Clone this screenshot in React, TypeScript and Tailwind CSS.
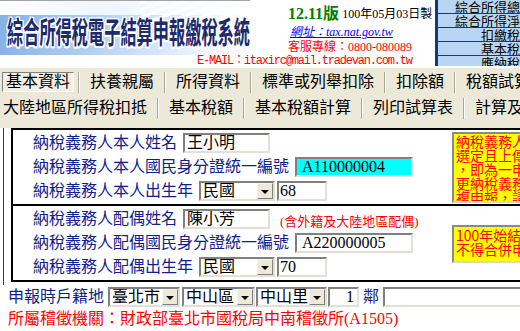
import type { ReactNode } from 'react'

const labelCls = 'whitespace-nowrap text-[16px] leading-none text-[#12208c]'

/** Win-classic sunken edit box */
function Box({ className, children }: { className: string; children?: ReactNode }) {
  return (
    <div
      className={`flex h-[20px] shrink-0 items-center overflow-hidden border-2 border-t-[#808080] border-r-[#e2e0d8] border-b-[#e2e0d8] border-l-[#808080] ${className}`}
    >
      {children}
    </div>
  )
}

function Select({ className, value }: { className: string; value: string }) {
  return (
    <Box className={`bg-white ${className}`}>
      <span className="flex-1 whitespace-nowrap pl-[2px] text-[16px] leading-none text-black">{value}</span>
      <span className="flex h-[16px] w-[16px] shrink-0 items-center justify-center border border-t-[#f6f5f0] border-r-[#808080] border-b-[#808080] border-l-[#f6f5f0] bg-[#ece9d8]">
        <span className="mt-[1px] h-0 w-0 border-x-[4px] border-t-[4px] border-x-transparent border-t-black" />
      </span>
    </Box>
  )
}

function Sep({ className = '' }: { className?: string }) {
  return <span className={`h-[21px] w-[2px] shrink-0 border-r border-l border-r-white border-l-[#aca899] ${className}`} />
}

const summaryRows = ['綜合所得總額', '綜合所得淨額', '扣繳稅額', '基本稅額', '應納稅額']

export default function App() {
  return (
    <div className="relative h-[331px] w-[520px] overflow-hidden bg-white font-['Liberation_Serif','Noto_Sans_CJK_TC',serif] text-black">
      {/* header */}
      <div className="flex h-[68px]">
        <div className="flex w-[435px] shrink-0 flex-col">
          <div className="flex h-[55px]">
            <div className="relative h-[55px] w-[250px] shrink-0 overflow-hidden border-t border-[#a3a3a3] bg-[linear-gradient(100deg,#86afe6_0%,#a9c9f0_30%,#d3e4f8_62%,#f4f8fd_85%,#ffffff_100%)] pt-[14px] pl-[7px]">
              <div className="absolute inset-x-0 top-0 h-[14px] bg-[linear-gradient(90deg,#ffffff_0%,#eef5fd_40%,#ffffff_100%)]" />
              <div className="absolute top-0 right-0 h-[40px] w-[110px] bg-[repeating-linear-gradient(160deg,rgba(255,255,255,0.85)_0px,rgba(255,255,255,0.85)_3px,rgba(255,255,255,0)_3px,rgba(255,255,255,0)_7px)]" />
              <div className="relative origin-left scale-x-[0.54] whitespace-nowrap font-['Noto_Sans_CJK_TC',sans-serif] text-[30px] leading-none font-bold text-[#1d2a6c] [text-shadow:2px_0_0_#fff,-2px_0_0_#fff,0_1.5px_0_#fff,0_-1.5px_0_#fff,2px_1.5px_0_#fff,-2px_-1.5px_0_#fff,2px_-1.5px_0_#fff,-2px_1.5px_0_#fff]">
                綜合所得稅電子結算申報繳稅系統
              </div>
            </div>
            <div className="ml-[38px] flex flex-col pt-[6px]">
              <div className="flex h-[16px] items-center whitespace-nowrap leading-none">
                <span className="text-[16px] font-bold text-[#008000]">12.11版</span>
                <span className="ml-[3px] text-[12px]">100年05月03日製</span>
              </div>
              <div className="mt-[3px] h-[14px] pl-[2px] text-[12px] leading-[14px] whitespace-nowrap text-[#0000ff] italic underline">
                網址：tax.nat.gov.tw
              </div>
              <div className="mt-[1px] h-[14px] text-[12px] leading-[14px] whitespace-nowrap text-[#ff0000]">
                客服專線：0800-080089
              </div>
            </div>
          </div>
          <div className="h-[13px] pl-[197px] font-['Liberation_Mono','Noto_Sans_CJK_TC',monospace] text-[12px] leading-[13px] tracking-[-1.2px] whitespace-nowrap text-[#ff0000]">
            E-MAIL：itaxirc@mail.tradevan.com.tw
          </div>
        </div>
        <div className="flex h-[66px] w-[100px] shrink-0 flex-col overflow-hidden border-l-[3px] border-[#1b3772] bg-[#b8d6f4] font-['Noto_Sans_CJK_TC',sans-serif]">
          {summaryRows.map((r) => (
            <div
              key={r}
              className="flex h-[14px] shrink-0 items-center justify-end overflow-hidden border-b border-[#1b3772] pr-[2px] whitespace-nowrap"
            >
              <span className="text-[13px] leading-[13px]">{r}</span>
            </div>
          ))}
        </div>
      </div>

      {/* tabs */}
      <div className="h-[60px] bg-[#ece9d8] text-[16px] leading-none">
        <div className="flex h-[28px] items-center pl-[2px]">
          <div className="flex h-[20px] items-center border border-t-[#808080] border-r-white border-b-white border-l-[#808080] bg-[#f1efe6] px-[3px] whitespace-nowrap">
            基本資料
          </div>
          <Sep className="ml-[4px]" />
          {['扶養親屬', '所得資料', '標準或列舉扣除', '扣除額'].map((t) => (
            <div key={t} className="flex items-center">
              <span className="px-[10px] whitespace-nowrap">{t}</span>
              <Sep />
            </div>
          ))}
          <span className="pl-[10px] whitespace-nowrap">稅額試算</span>
        </div>
        <div className="flex h-[32px] items-center pb-[8px] pl-[3px]">
          <span className="pr-[10px] whitespace-nowrap">大陸地區所得稅扣抵</span>
          <Sep />
          {['基本稅額', '基本稅額計算', '列印試算表'].map((t) => (
            <div key={t} className="flex items-center">
              <span className="px-[10px] whitespace-nowrap">{t}</span>
              <Sep />
            </div>
          ))}
          <span className="pl-[10px] whitespace-nowrap">計算及繳稅</span>
        </div>
      </div>

      {/* form */}
      <div className="ml-[3px] w-[640px] border-l border-[#2233c4] pb-[3px] pl-[7px]">
        <div className="border-2 border-black">
          <div className="flex border-b-2 border-black">
            <div className="flex w-[439px] shrink-0 flex-col py-[1px] pl-[20px]">
              <div className="flex h-[24px] items-center">
                <span className={labelCls}>納稅義務人本人姓名</span>
                <Box className="ml-[6px] w-[87px] bg-white">
                  <span className="pl-[2px] text-[16px] leading-none">王小明</span>
                </Box>
              </div>
              <div className="flex h-[24px] items-center">
                <span className={labelCls}>納稅義務人本人國民身分證統一編號</span>
                <Box className="ml-[6px] w-[118px] bg-[#00ffff]">
                  <span className="pl-[5px] text-[16px] leading-none">A110000004</span>
                </Box>
              </div>
              <div className="flex h-[24px] items-center">
                <span className={labelCls}>納稅義務人本人出生年</span>
                <Select className="ml-[6px] w-[76px]" value="民國" />
                <Box className="ml-[2px] w-[50px] bg-white">
                  <span className="pl-[1px] text-[16px] leading-none">68</span>
                </Box>
              </div>
            </div>
            <div className="mt-[2px] mb-[1px] h-[71px] w-[150px] shrink-0 overflow-hidden border-2 border-t-[#8a8a8a] border-r-[#d8d6ce] border-b-[#d8d6ce] border-l-[#8a8a8a] bg-[#ffff00] pl-[2px] font-['Noto_Sans_CJK_TC',sans-serif] text-[14px] leading-[14px] whitespace-nowrap text-[#ff0000]">
              <div>納稅義務人本人及配偶</div>
              <div>選定且上傳申報資料後</div>
              <div>，即為一申報案件，如需變</div>
              <div>更納稅義務人，請勿重</div>
              <div>複申報，請洽國稅局</div>
            </div>
          </div>
          <div className="flex">
            <div className="flex w-[439px] shrink-0 flex-col py-[1px] pl-[20px]">
              <div className="flex h-[24px] items-center">
                <span className={labelCls}>納稅義務人配偶姓名</span>
                <Box className="ml-[6px] w-[87px] bg-white">
                  <span className="pl-[2px] text-[16px] leading-none">陳小芳</span>
                </Box>
                <span className="mt-[5px] ml-[10px] text-[13px] leading-none whitespace-nowrap text-[#ff0000]">
                  (含外籍及大陸地區配偶)
                </span>
              </div>
              <div className="flex h-[24px] items-center">
                <span className={labelCls}>納稅義務人配偶國民身分證統一編號</span>
                <Box className="ml-[6px] w-[118px] bg-white">
                  <span className="pl-[5px] text-[16px] leading-none">A220000005</span>
                </Box>
              </div>
              <div className="flex h-[24px] items-center">
                <span className={labelCls}>納稅義務人配偶出生年</span>
                <Select className="ml-[6px] w-[76px]" value="民國" />
                <Box className="ml-[2px] w-[50px] bg-white">
                  <span className="pl-[1px] text-[16px] leading-none">70</span>
                </Box>
              </div>
            </div>
            <div className="mt-[19px] h-[38px] w-[150px] shrink-0 overflow-hidden border-2 border-t-[#8a8a8a] border-r-[#d8d6ce] border-b-[#d8d6ce] border-l-[#8a8a8a] bg-[#ffff00] pt-[1px] pl-[2px] font-['Noto_Sans_CJK_TC',sans-serif] text-[14px] leading-[14px] whitespace-nowrap text-[#ff0000]">
              <div>100年始結婚者</div>
              <div>不得合併申報</div>
            </div>
          </div>
        </div>
      </div>

      <div className="mt-[2px] flex h-[20px] items-center pl-[8px]">
        <span className={labelCls}>申報時戶籍地</span>
        <Select className="ml-[4px] w-[72px]" value="臺北市" />
        <Select className="ml-[2px] w-[73px]" value="中山區" />
        <Select className="ml-[1px] w-[71px]" value="中山里" />
        <Box className="ml-[1px] w-[31px] justify-end bg-white">
          <span className="pr-[3px] text-[16px] leading-none">1</span>
        </Box>
        <span className={`ml-[4px] ${labelCls}`}>鄰</span>
        <Box className="ml-[4px] w-[200px] bg-white" />
      </div>
      <div className="mt-[3px] pl-[8px] text-[16px] leading-[17px] whitespace-nowrap text-[#ff0000]">
        所屬稽徵機關：財政部臺北市國稅局中南稽徵所(A1505)
      </div>
    </div>
  )
}
